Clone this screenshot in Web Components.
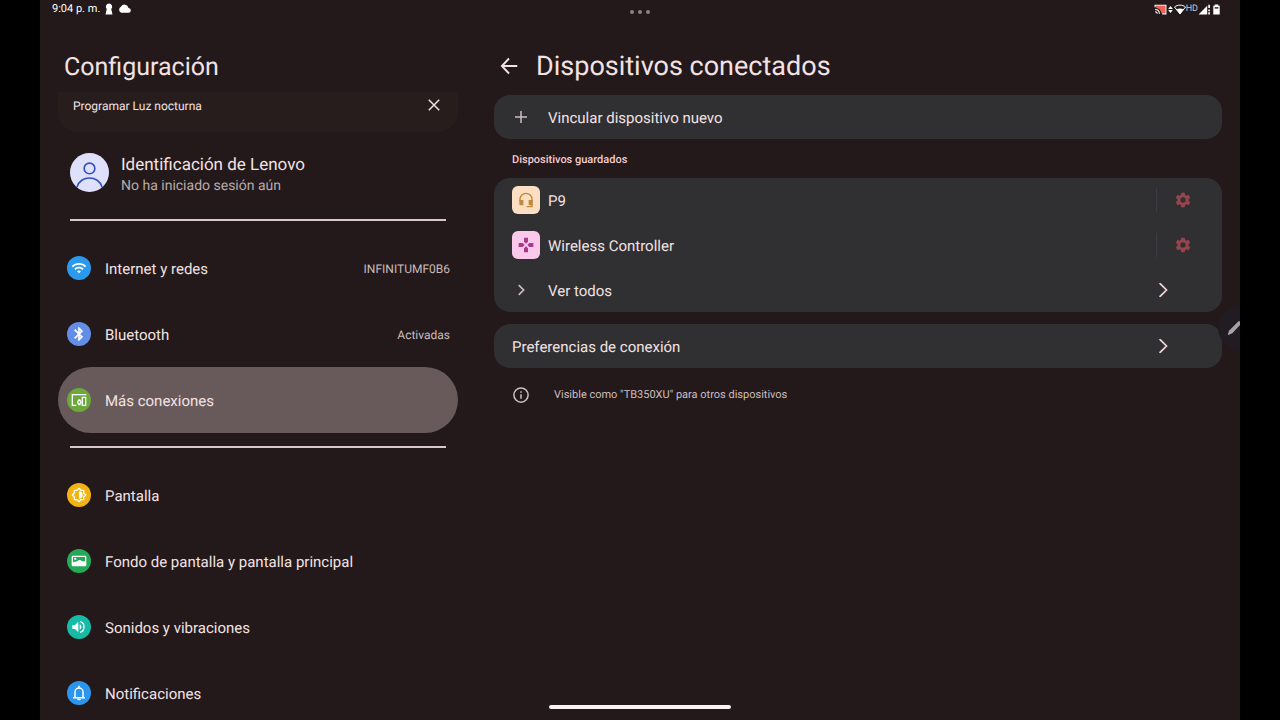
<!DOCTYPE html>
<html lang="es">
<head>
<meta charset="utf-8">
<meta name="viewport" content="width=device-width, initial-scale=1">
<title>Configuración</title>
<style>
    body {
        margin: 0;
        background: #000;
        color: #f3e2e3;
        font-family: Roboto, "Noto Sans", sans-serif;
        text-rendering: geometricPrecision;
    }
</style>
</head>
<body>
<settings-app>
    <status-bar slot="status" time="9:04 p. m."></status-bar>

    <settings-pane slot="sidebar" heading="Configuración">
        <tip-banner>Programar Luz nocturna</tip-banner>
        <account-link name="Identificación de Lenovo">No ha iniciado sesión aún</account-link>
        <list-divider></list-divider>
        <menu-item icon="wifi" colour="#2c9aec" value="INFINITUMF0B6">Internet y redes</menu-item>
        <menu-item icon="bluetooth" colour="#638ee8" value="Activadas">Bluetooth</menu-item>
        <menu-item icon="devices" colour="#6ca83a" selected>Más conexiones</menu-item>
        <list-divider></list-divider>
        <menu-item icon="brightness" colour="#f2b413">Pantalla</menu-item>
        <menu-item icon="picture" colour="#24a957">Fondo de pantalla y pantalla principal</menu-item>
        <menu-item icon="sound" colour="#15bba5">Sonidos y vibraciones</menu-item>
        <menu-item icon="bell" colour="#2c96ec">Notificaciones</menu-item>
    </settings-pane>

    <settings-pane slot="detail" heading="Dispositivos conectados" back>
        <card-group>
            <card-row icon="plus">Vincular dispositivo nuevo</card-row>
        </card-group>
        <section-title>Dispositivos guardados</section-title>
        <card-group>
            <card-row icon="headset" tile="#fcdfc2" tint="#bf8a3c" gear>P9</card-row>
            <card-row icon="gamepad" tile="#fac8ea" tint="#a83a8a" gear>Wireless Controller</card-row>
            <card-row icon="chevron-small" more>Ver todos</card-row>
        </card-group>
        <card-group class="spaced">
            <card-row more>Preferencias de conexión</card-row>
        </card-group>
        <info-note>Visible como "TB350XU" para otros dispositivos</info-note>
    </settings-pane>
</settings-app>

<script>
const ICONS = {
    'wifi': '<path d="M1 9l2 2c5-5 13-5 18 0l2-2C17 3 7 3 1 9zm8 8l3 3 3-3c-1.7-1.6-4.3-1.6-6 0zm-4-4l2 2c2.8-2.8 7.2-2.8 10 0l2-2C15 9.1 9 9.1 5 13z"/>',
    'bluetooth': '<path stroke="currentColor" stroke-width="0.7" d="M17.7 7.7L12 2h-1v7.6L6.4 5 5 6.4l5.6 5.6L5 17.6 6.4 19l4.6-4.6V22h1l5.7-5.7-4.3-4.3 4.3-4.3zM13 5.8l1.9 1.9L13 9.6V5.8zm1.9 10.5L13 18.2v-3.8l1.9 1.9z"/>',
    'devices': '<path fill="none" stroke="currentColor" stroke-width="2" d="M23 4H2v16h6M17 8h5v12h-5z"/><circle cx="12.5" cy="15.5" r="2.5" fill="none" stroke="currentColor" stroke-width="2"/><path d="M11 11h3v2h-3zm0 7h3v2h-3z"/>',
    'brightness': '<path fill="none" stroke="currentColor" stroke-width="2" stroke-linejoin="round" d="M12 2l3 3h4v4l3 3-3 3v4h-4l-3 3-3-3H5v-4l-3-3 3-3V5h4z"/><path d="M12 6.5a5.500 5.500 0 0 1 0 11z"/>',
    'picture': '<path fill-rule="evenodd" d="M3 4h18a2 2 0 0 1 2 2v12a2 2 0 0 1-2 2H3a2 2 0 0 1-2-2V6a2 2 0 0 1 2-2zm0 2v8c3-1 4-2 6-1 2-3 5-3 7-1 2 1 4 1 5 0V6zm2 1h3v3H5z"/>',
    'sound': '<path d="M2 9v6h4l5 5V4L6 9zm11-1v8c3.500-1.500 3.500-6.500 0-8z"/><path fill="none" stroke="currentColor" stroke-width="2" d="M13.500 4c8 2 8 14 0 16"/>',
    'bell': '<path fill="none" stroke="currentColor" stroke-width="2.2" d="M3 19h18M6 18.500V10.500a6 6 0 0 1 12 0v8M12 1v4"/><path d="M9 20.500h6a3 2.500 0 0 1-6 0z"/>',
    'plus': '<path fill="none" stroke="currentColor" stroke-width="2" d="M12 4v16M4 12h16"/>',
    'close': '<path fill="none" stroke="currentColor" stroke-width="2.5" d="M3 3l18 18M21 3L3 21"/>',
    'back': '<path fill="none" stroke="currentColor" stroke-width="2.5" d="M23 12H3M12 2L2.500 12l9.500 10"/>',
    'chevron': '<path fill="none" stroke="currentColor" stroke-width="3" stroke-linecap="round" d="M7 1l11 11L7 23"/>',
    'chevron-small': '<path fill="none" stroke="currentColor" stroke-width="2.2" d="M9 5.500l6.500 6.500L9 18.500"/>',
    'headset': '<path fill="none" stroke="currentColor" stroke-width="2" d="M3 14v-3a9 9 0 0 1 18 0v11h-8"/><path d="M2 12h6v8H4a2 2 0 0 1-2-2zm14 0h6v8h-6z"/>',
    'gamepad': '<path d="M9 1h6v6l-3 3-3-3zM9 23h6v-6l-3-3-3 3zM1 9v6h6l3-3-3-3zM23 9v6h-6l-3-3 3-3z"/>',
    'gear': '<path fill-rule="evenodd" d="M9.500 1h5l.6 3.300 2 1.200 3.200-1.200 2.500 4.300L20.200 11v2l2.600 2.400-2.500 4.300-3.200-1.200-2 1.200-.6 3.300h-5l-.6-3.300-2-1.200-3.200 1.200-2.500-4.300L3.800 13v-2L1.200 8.600l2.500-4.300 3.200 1.200 2-1.200zM12 8a4 4 0 1 0 0 8 4 4 0 0 0 0-8z"/>',
    'info': '<circle cx="12" cy="12" r="9.5" fill="none" stroke="currentColor" stroke-width="2"/><path d="M11 11h2v6h-2zm0-4h2v2h-2z"/>',
    'person': '<g fill="none" stroke="currentColor" stroke-width="1"><circle cx="12" cy="9.5" r="3.3"/><path d="M4.300 21c2-7.500 13.400-7.500 15.400 0"/></g>',
    'keyhole': '<path d="M12 1a6.500 6.500 0 0 1 4.500 11L19 23H5l2.500-11A6.500 6.500 0 0 1 12 1z"/>',
    'cloud': '<path d="M19.400 9A7.500 7.500 0 0 0 5.400 7 6 6 0 0 0 6 18h13a4.500 4.500 0 0 0 .4-9z"/>',
    'cast': '<path fill="#f06457" d="M4 5h17v14h-7C13 13 9 9 4 9z"/><path fill="none" stroke="currentColor" stroke-width="2" d="M2 8V4h20v16h-7M2 12c5 0 8 3 8 8M2 16c3 0 4 2 4 4"/>',
    'traffic': '<path d="M12 0l8 10H4zM12 24l8-10H4z"/>',
    'wifi-status': '<path fill="none" stroke="currentColor" stroke-width="2" stroke-linejoin="round" d="M1 8c6-5 16-5 22 0L12 22z"/><path d="M5 13c4-3 10-3 14 0l-7 9z"/>',
    'signal': '<path d="M1 21L17 5v16zM19 12h3v3h-3zm0 5h3v4h-3zM19 3h3v6h-3z"/>',
    'battery': '<path d="M8 1h8v3h3v19H5V4h3z"/><path fill="#231a1b" d="M8 7h8v3H8z"/>',
    'pencil': '<path d="M1 23l2-7L18 1l4 4L8 20z"/>'
};

class UiIcon extends HTMLElement {
    constructor() {
        super();
        this.attachShadow({ mode: 'open' });
    }

    connectedCallback() {
        const size = this.getAttribute('size') || '18';
        this.shadowRoot.innerHTML = `
            <style>
                :host { display: block; flex: none; width: ${size}px; height: ${size}px; }
                svg { display: block; width: 100%; height: 100%; }
            </style>
            <svg viewBox="0 0 24 24" fill="currentColor" aria-hidden="true">${ICONS[this.getAttribute('name')] || ''}</svg>
        `;
    }
}

class SettingsApp extends HTMLElement {
    constructor() {
        super();
        this.attachShadow({ mode: 'open' });
        this.shadowRoot.innerHTML = `
            <style>
                :host {
                    display: flex;
                    flex-direction: column;
                    position: relative;
                    height: 100vh;
                    margin: 0 40px;
                    overflow: hidden;
                    background: #23191a;
                }
                main {
                    display: grid;
                    grid-template-columns: 50fr 91fr;
                    gap: 36px;
                    flex: 1;
                    min-height: 0;
                    padding: 0 18px;
                }
                /* edge bubble that opens the pen menu */
                .pen {
                    position: absolute;
                    right: -22px;
                    top: 306px;
                    width: 44px;
                    height: 44px;
                    padding: 0 0 0 9px;
                    border: 0;
                    border-radius: 50%;
                    background: #211b22;
                    color: #a5a3a7;
                }
                .home {
                    position: absolute;
                    bottom: 11px;
                    left: 50%;
                    width: 182px;
                    height: 4px;
                    margin-left: -91px;
                    border-radius: 2px;
                    background: #f7f3f3;
                }
            </style>
            <slot name="status"></slot>
            <main>
                <slot name="sidebar"></slot>
                <slot name="detail"></slot>
            </main>
            <button class="pen" aria-label="Lápiz"><ui-icon name="pencil" size="16"></ui-icon></button>
            <div class="home"></div>
        `;
    }
}

class StatusBar extends HTMLElement {
    constructor() {
        super();
        this.attachShadow({ mode: 'open' });
    }

    connectedCallback() {
        this.shadowRoot.innerHTML = `
            <style>
                :host {
                    display: grid;
                    grid-template-columns: 1fr auto 1fr;
                    align-items: center;
                    flex: none;
                    height: 18px;
                    padding: 0 18px 2px 12px;
                    color: #fff;
                    font-size: 11px;
                    line-height: 16px;
                }
                div { display: flex; align-items: center; }
                .left { gap: 3px; }
                .dots { gap: 4px; padding: 5px 0 0 6px; }
                .dots i { width: 4px; height: 4px; border-radius: 50%; background: #8b8385; }
                .right { justify-content: flex-end; }
                .hd { font-size: 9px; color: #cfc8c9; }
            </style>
            <div class="left">
                <span>${this.getAttribute('time')}</span>
                <ui-icon name="keyhole" size="12"></ui-icon>
                <ui-icon name="cloud" size="13"></ui-icon>
            </div>
            <div class="dots"><i></i><i></i><i></i></div>
            <div class="right">
                <ui-icon name="cast" size="13"></ui-icon>
                <ui-icon name="traffic" size="7"></ui-icon>
                <ui-icon name="wifi-status" size="12"></ui-icon>
                <span class="hd">HD</span>
                <ui-icon name="signal" size="13"></ui-icon>
                <ui-icon name="battery" size="11"></ui-icon>
            </div>
        `;
    }
}

class SettingsPane extends HTMLElement {
    constructor() {
        super();
        this.attachShadow({ mode: 'open' });
    }

    connectedCallback() {
        const back = this.hasAttribute('back');
        this.shadowRoot.innerHTML = `
            <style>
                :host { display: flex; flex-direction: column; min-width: 0; min-height: 0; }
                header {
                    display: flex;
                    align-items: center;
                    flex: none;
                    gap: 18px;
                    padding: 32px 6px 8px;
                }
                header.back { padding: 30px 6px 13px; }
                h1 { margin: 0; font-size: 25px; font-weight: 400; line-height: 32px; }
                .back h1 { font-size: 27px; }
                button { padding: 0; border: 0; background: none; color: inherit; }
                .body { flex: 1; min-height: 0; overflow: hidden; }
            </style>
            <header class="${back ? 'back' : ''}">
                ${back ? '<button aria-label="Atrás"><ui-icon name="back"></ui-icon></button>' : ''}
                <h1>${this.getAttribute('heading')}</h1>
            </header>
            <div class="body"><slot></slot></div>
        `;
    }
}

class TipBanner extends HTMLElement {
    constructor() {
        super();
        this.attachShadow({ mode: 'open' });
        this.shadowRoot.innerHTML = `
            <style>
                :host {
                    display: flex;
                    justify-content: space-between;
                    align-items: flex-start;
                    padding: 6px 17px 18px 15px;
                    border-radius: 0 0 20px 20px;
                    background: #271d1d;
                    font-size: 12px;
                    line-height: 16px;
                }
                button { padding: 0; border: 0; background: none; color: inherit; }
            </style>
            <slot></slot>
            <button aria-label="Cerrar"><ui-icon name="close" size="14"></ui-icon></button>
        `;
    }
}

class AccountLink extends HTMLElement {
    constructor() {
        super();
        this.attachShadow({ mode: 'open' });
    }

    connectedCallback() {
        this.shadowRoot.innerHTML = `
            <style>
                :host { display: block; margin-top: 7px; }
                a {
                    display: flex;
                    align-items: center;
                    gap: 12px;
                    min-height: 67px;
                    padding: 0 12px;
                    color: inherit;
                    text-decoration: none;
                }
                .avatar { border-radius: 50%; overflow: hidden; background: #dfe0fb; color: #3350c0; }
                .text { padding-top: 5px; }
                .name { display: block; font-size: 17px; line-height: 22px; }
                .state { display: block; font-size: 14px; line-height: 20px; color: #b9abac; }
            </style>
            <a href="#cuenta">
                <span class="avatar"><ui-icon name="person" size="39"></ui-icon></span>
                <span class="text">
                    <span class="name">${this.getAttribute('name')}</span>
                    <span class="state"><slot></slot></span>
                </span>
            </a>
        `;
    }
}

class ListDivider extends HTMLElement {
    constructor() {
        super();
        this.attachShadow({ mode: 'open' });
        this.shadowRoot.innerHTML = `
            <style>
                :host { display: block; height: 2px; margin: 13px 12px 14px; background: #d9c8ca; }
            </style>
        `;
    }
}

class MenuItem extends HTMLElement {
    constructor() {
        super();
        this.attachShadow({ mode: 'open' });
    }

    connectedCallback() {
        this.shadowRoot.innerHTML = `
            <style>
                :host { display: block; }
                a {
                    display: flex;
                    align-items: center;
                    gap: 14px;
                    height: 66px;
                    padding: 0 8px 0 9px;
                    border-radius: 33px;
                    color: inherit;
                    font-size: 15px;
                    line-height: 20px;
                    text-decoration: none;
                }
                :host([selected]) a { background: #685a5b; }
                .badge {
                    display: grid;
                    place-items: center;
                    flex: none;
                    width: 24px;
                    height: 24px;
                    border-radius: 50%;
                    background: ${this.getAttribute('colour')};
                    color: #fff;
                }
                .label { flex: 1; padding-top: 2px; }
                .value { padding-top: 2px; font-size: 12px; color: #c9bbbc; }
            </style>
            <a href="#${this.getAttribute('icon')}">
                <span class="badge"><ui-icon name="${this.getAttribute('icon')}" size="16"></ui-icon></span>
                <span class="label"><slot></slot></span>
                <span class="value">${this.getAttribute('value') || ''}</span>
            </a>
        `;
    }
}

class CardGroup extends HTMLElement {
    constructor() {
        super();
        this.attachShadow({ mode: 'open' });
        this.shadowRoot.innerHTML = `
            <style>
                :host {
                    display: grid;
                    gap: 1px;
                    border-radius: 16px;
                    background: #303033;
                }
                :host(.spaced) { margin-top: 12px; }
            </style>
            <slot></slot>
        `;
    }
}

class CardRow extends HTMLElement {
    constructor() {
        super();
        this.attachShadow({ mode: 'open' });
    }

    connectedCallback() {
        const icon = this.getAttribute('icon');
        const tile = this.getAttribute('tile');
        const label = this.textContent;

        this.shadowRoot.innerHTML = `
            <style>
                :host { display: flex; align-items: center; height: 44px; }
                button { padding: 0; border: 0; background: none; color: inherit; font: inherit; }
                .main {
                    display: flex;
                    align-items: center;
                    flex: 1;
                    gap: 8px;
                    height: 100%;
                    padding-left: 18px;
                    font-size: 15px;
                    line-height: 20px;
                    text-align: left;
                    text-rendering: inherit;
                }
                .label { padding-top: 2px; }
                .lead { display: grid; align-items: center; width: 28px; height: 28px; color: #cdbfc0; }
                .tile {
                    justify-items: center;
                    border-radius: 6px;
                    background: ${tile};
                    color: ${this.getAttribute('tint')};
                }
                .more { width: 66px; color: #f0d3d6; }
                .gear {
                    display: grid;
                    place-items: center;
                    width: 53px;
                    height: 24px;
                    margin-right: 13px;
                    border-left: 1px solid #3e3c40;
                    color: #96454d;
                }
            </style>
            <button class="main">
                ${icon ? `<span class="lead ${tile ? 'tile' : ''}"><ui-icon name="${icon}" size="${tile ? 16 : 18}"></ui-icon></span>` : ''}
                <span class="label"><slot></slot></span>
            </button>
            ${this.hasAttribute('gear') ? `<button class="gear" aria-label="Ajustes de ${label}"><ui-icon name="gear" size="16"></ui-icon></button>` : ''}
            ${this.hasAttribute('more') ? '<span class="more"><ui-icon name="chevron" size="14"></ui-icon></span>' : ''}
        `;
    }
}

class SectionTitle extends HTMLElement {
    constructor() {
        super();
        this.attachShadow({ mode: 'open' });
        this.shadowRoot.innerHTML = `
            <style>
                :host { display: block; padding: 13px 18px 10px; color: #f5cdd2; }
                h2 { margin: 0; font-size: 11px; font-weight: 500; line-height: 16px; }
            </style>
            <h2><slot></slot></h2>
        `;
    }
}

class InfoNote extends HTMLElement {
    constructor() {
        super();
        this.attachShadow({ mode: 'open' });
        this.shadowRoot.innerHTML = `
            <style>
                :host {
                    display: flex;
                    align-items: center;
                    gap: 24px;
                    height: 44px;
                    margin-top: 5px;
                    padding: 0 18px;
                    color: #cdbfc0;
                    font-size: 11px;
                    line-height: 16px;
                }
            </style>
            <ui-icon name="info"></ui-icon>
            <span><slot></slot></span>
        `;
    }
}

customElements.define('ui-icon', UiIcon);
customElements.define('settings-app', SettingsApp);
customElements.define('status-bar', StatusBar);
customElements.define('settings-pane', SettingsPane);
customElements.define('tip-banner', TipBanner);
customElements.define('account-link', AccountLink);
customElements.define('list-divider', ListDivider);
customElements.define('menu-item', MenuItem);
customElements.define('card-group', CardGroup);
customElements.define('card-row', CardRow);
customElements.define('section-title', SectionTitle);
customElements.define('info-note', InfoNote);
</script>
</body>
</html>
